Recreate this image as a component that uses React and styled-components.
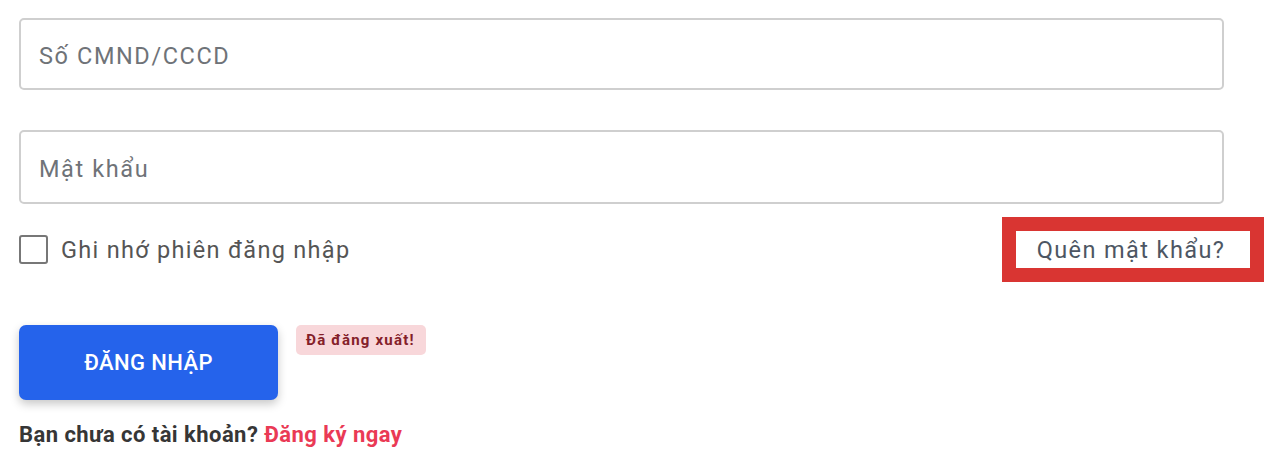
import React from "react";
import styled, { createGlobalStyle } from "styled-components";

const Global = createGlobalStyle`
  html, body { margin: 0; padding: 0; background: #fff; }
  body { font-family: Roboto, "Noto Sans", Arial, sans-serif; }
  * { box-sizing: border-box; }
`;

const Form = styled.form`
  width: 1224px;
  padding: 18px 0 0 19px;
  display: flex;
  flex-direction: column;
`;

const Field = styled.input`
  width: 100%;
  height: ${(p) => p.$h}px;
  margin-bottom: ${(p) => p.$mb}px;
  border: 2px solid #cfcfcf;
  border-radius: 5px;
  padding: 4px 18px 0;
  font-family: Roboto, sans-serif;
  font-size: 23.5px;
  letter-spacing: 1.6px;
  color: #333;
  outline: none;
  &::placeholder { color: #6f7378; }
`;

const OptionsRow = styled.div`
  display: flex;
  align-items: center;
  justify-content: space-between;
  margin-right: -40px;
`;

const CheckLabel = styled.label`
  display: flex;
  align-items: center;
  gap: 13px;
  font-size: 23.5px;
  letter-spacing: 1.3px;
  color: #555;
`;

const Box = styled.span`
  width: 29px;
  height: 29px;
  border: 2px solid #777;
  border-radius: 3px;
  display: inline-block;
`;

const Forgot = styled.a`
  display: flex;
  align-items: center;
  justify-content: center;
  width: 262px;
  height: 65px;
  padding-right: 4px;
  padding-top: 1px;
  border: 14px solid #d93532;
  font-size: 23.5px;
  letter-spacing: 1.4px;
  color: #4d5663;
  text-decoration: none;
`;

const ActionRow = styled.div`
  display: flex;
  align-items: flex-start;
  gap: 18px;
  margin-top: 43px;
`;

const SubmitButton = styled.button`
  width: 259px;
  height: 75px;
  border: none;
  border-radius: 7px;
  background: #2563eb;
  color: #fff;
  font-family: Roboto, sans-serif;
  font-size: 22px;
  letter-spacing: 0.4px;
  font-weight: 500;
  box-shadow: 0 4px 10px rgba(0, 0, 0, 0.22);
`;

const Badge = styled.span`
  display: inline-block;
  background: #f8d7da;
  color: #842029;
  font-size: 15px;
  letter-spacing: 1.2px;
  font-weight: 700;
  padding: 6px 11px 6px 10px;
  border-radius: 5px;
`;

const Signup = styled.p`
  margin: 22px 0 0;
  font-size: 22px;
  letter-spacing: 0.45px;
  font-weight: 700;
  color: #363636;
`;

const SignupLink = styled.a`
  color: #ea3a55;
  text-decoration: none;
`;

export default function App() {
  return (
    <>
      <Global />
      <Form onSubmit={(e) => e.preventDefault()}>
        <Field $h={72} $mb={40} placeholder="Số CMND/CCCD" />
        <Field $h={74} $mb={13} type="password" placeholder="Mật khẩu" />
        <OptionsRow>
          <CheckLabel>
            <Box />
            Ghi nhớ phiên đăng nhập
          </CheckLabel>
          <Forgot href="#">Quên mật khẩu?</Forgot>
        </OptionsRow>
        <ActionRow>
          <SubmitButton type="submit">ĐĂNG NHẬP</SubmitButton>
          <Badge>Đã đăng xuất!</Badge>
        </ActionRow>
        <Signup>
          Bạn chưa có tài khoản? <SignupLink href="#">Đăng ký ngay</SignupLink>
        </Signup>
      </Form>
    </>
  );
}
